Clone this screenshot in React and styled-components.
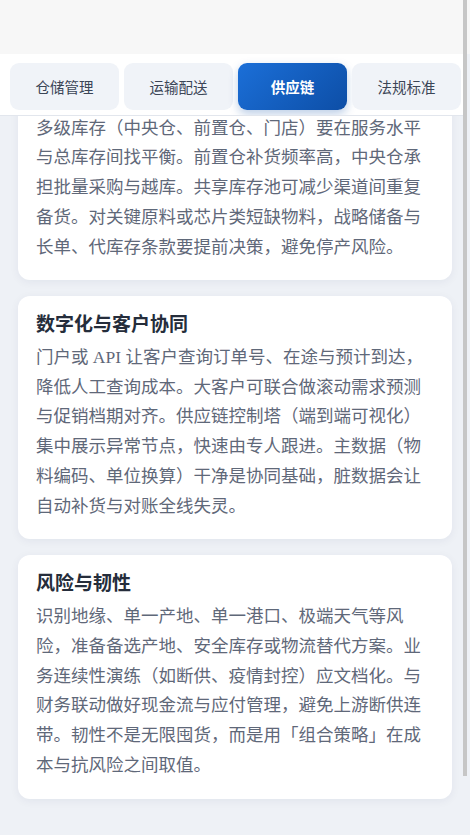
import { useState } from "react";
import styled, { createGlobalStyle } from "styled-components";

const GlobalStyle = createGlobalStyle`
  html, body {
    margin: 0;
    padding: 0;
    background: #eef1f6;
    overflow: hidden;
  }
  body {
    font-family: "Liberation Serif", "Noto Sans CJK SC", serif;
  }
`;

const Shell = styled.div`
  height: 100vh;
  margin-right: 7px;
  overflow: hidden;
  background: #eef1f6;
`;

/* thin scrollbar drawn over the right edge, as in the capture */
const ScrollTrack = styled.div`
  position: fixed;
  top: 0;
  right: 0;
  width: 7px;
  height: 100vh;
  background: linear-gradient(to bottom, #f7f7f7 0, #f7f7f7 54px, #eef1f6 54px);
`;

const ScrollThumb = styled.div`
  width: 4px;
  height: 776px;
  background: #c6c6c6;
`;

const TopBar = styled.header`
  height: 54px;
  background: #f7f7f7;
`;

const TabBar = styled.nav`
  position: fixed;
  top: 54px;
  left: 0;
  right: 7px;
  z-index: 5;
  height: 62px;
  box-sizing: border-box;
  padding: 9px 0 0 10px;
  display: flex;
  gap: 5px;
  background: #ffffff;
  border-bottom: 1px solid #e2e6ed;
  overflow: hidden;
`;

const Tab = styled.button`
  flex: 0 0 109px;
  height: 47px;
  border: none;
  border-radius: 9px;
  font-family: "Noto Sans CJK SC", "Noto Sans", sans-serif;
  font-size: 14.5px;
  font-weight: ${(p) => (p.$active ? 700 : 400)};
  color: ${(p) => (p.$active ? "#ffffff" : "#3b4556")};
  background: ${(p) =>
    p.$active ? "linear-gradient(135deg, #1b6fd8 0%, #0d4ea6 100%)" : "#f0f3f8"};
  box-shadow: ${(p) => (p.$active ? "0 4px 10px rgba(13, 78, 166, 0.28)" : "none")};
  cursor: pointer;
`;

const Main = styled.main`
  padding: 13px 11px 100px 18px;
  display: flex;
  flex-direction: column;
  gap: 16px;
`;

const Card = styled.section`
  background: #ffffff;
  border-radius: 12px;
  padding: 16px 18px 18px;
  box-shadow: 0 2px 10px rgba(20, 40, 80, 0.06);
`;

const CardTitle = styled.h3`
  margin: 0 0 4px;
  font-size: 19px;
  line-height: 1.4;
  font-weight: 700;
  color: #252d3b;
`;

const CardText = styled.p`
  margin: 0;
  font-size: 17.5px;
  line-height: 1.7;
  color: #5f6879;
`;

const tabs = ["仓储管理", "运输配送", "供应链", "法规标准"];

const sections = [
  {
    title: "库存布局与安全库存",
    text: "多级库存（中央仓、前置仓、门店）要在服务水平与总库存间找平衡。前置仓补货频率高，中央仓承担批量采购与越库。共享库存池可减少渠道间重复备货。对关键原料或芯片类短缺物料，战略储备与长单、代库存条款要提前决策，避免停产风险。",
  },
  {
    title: "数字化与客户协同",
    text: "门户或 API 让客户查询订单号、在途与预计到达，降低人工查询成本。大客户可联合做滚动需求预测与促销档期对齐。供应链控制塔（端到端可视化）集中展示异常节点，快速由专人跟进。主数据（物料编码、单位换算）干净是协同基础，脏数据会让自动补货与对账全线失灵。",
  },
  {
    title: "风险与韧性",
    text: "识别地缘、单一产地、单一港口、极端天气等风险，准备备选产地、安全库存或物流替代方案。业务连续性演练（如断供、疫情封控）应文档化。与财务联动做好现金流与应付管理，避免上游断供连带。韧性不是无限囤货，而是用「组合策略」在成本与抗风险之间取值。",
  },
];

export default function App() {
  const [active, setActive] = useState(2);

  return (
    <>
      <GlobalStyle />
      <Shell>
        <TopBar />
        <TabBar>
          {tabs.map((t, i) => (
            <Tab key={t} $active={i === active} onClick={() => setActive(i)}>
              {t}
            </Tab>
          ))}
        </TabBar>
        <Main>
          {sections.map((s) => (
            <Card key={s.title}>
              <CardTitle>{s.title}</CardTitle>
              <CardText>{s.text}</CardText>
            </Card>
          ))}
        </Main>
      </Shell>
      <ScrollTrack>
        <ScrollThumb />
      </ScrollTrack>
    </>
  );
}
